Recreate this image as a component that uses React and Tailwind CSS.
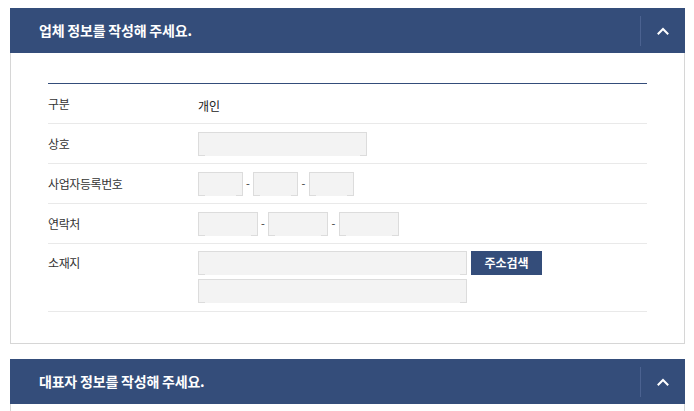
import React from 'react'

const FONT = { fontFamily: '"Noto Sans CJK KR", "Noto Sans", sans-serif' }

const Chevron = () => (
       <svg width="12" height="8" viewBox="0 0 12 8" fill="none">
              <polyline points="1.5,6.5 6,2 10.5,6.5" stroke="#ffffff" strokeWidth="2" strokeLinecap="square" />
       </svg>
)

const PanelHeader = ({ title }) => (
       <div className="h-[45px] bg-[#344d7a] flex items-center">
              <div className="flex-1 pl-[29px] text-white text-[14px] font-bold tracking-[-0.2px]">{title}</div>
              <div className="w-px h-[30px] bg-[#4b6290]"></div>
              <div className="w-[44px] flex items-center justify-center">
                     <Chevron />
              </div>
       </div>
)

// gray input box, bottom border only shows at the corners like the original
const Box = ({ w }) => (
       <div className={`relative h-[24px] bg-[#f3f3f3] border border-[#dcdcdc] ${w}`}>
              <span className="absolute left-[6px] right-[6px] bottom-[-1px] h-px bg-[#f3f3f3]"></span>
       </div>
)

const Dash = ({ w = 'w-[10px]' }) => <span className={`${w} text-center text-[11px] text-[#333]`}>-</span>

const Row = ({ label, children, top }) => (
       <div className={`flex border-b border-[#e9e9e9] ${top ? 'items-start pt-[7px] pb-[8px]' : 'items-center h-[40px]'}`}>
              <div className={`w-[150px] text-[12px] text-[#333] tracking-[-0.4px] ${top ? 'leading-[24px]' : ''}`}>{label}</div>
              <div className="flex-1">{children}</div>
       </div>
)

const App = () => {
       return (
              <div className="min-h-[411px] bg-white pt-[8px] pl-[10px] pr-[9px]" style={FONT}>
                     <section>
                            <PanelHeader title="업체 정보를 작성해 주세요." />
                            <div className="border-x border-b border-[#d6d6d6] px-[37px] pt-[30px] pb-[31px]">
                                   <div className="h-px bg-[#344d7a]"></div>
                                   <Row label="구분">
                                          <span className="text-[12px] text-[#222]">개인</span>
                                   </Row>
                                   <Row label="상호">
                                          <Box w="w-[169px]" />
                                   </Row>
                                   <Row label="사업자등록번호">
                                          <div className="flex items-center">
                                                 <Box w="w-[45px]" />
                                                 <Dash />
                                                 <Box w="w-[45px]" />
                                                 <Dash w="w-[11px]" />
                                                 <Box w="w-[45px]" />
                                          </div>
                                   </Row>
                                   <Row label="연락처">
                                          <div className="flex items-center">
                                                 <Box w="w-[60px]" />
                                                 <Dash />
                                                 <Box w="w-[60px]" />
                                                 <Dash w="w-[11px]" />
                                                 <Box w="w-[60px]" />
                                          </div>
                                   </Row>
                                   <Row label="소재지" top>
                                          <div className="flex flex-col gap-[4px]">
                                                 <div className="flex items-center gap-[4px]">
                                                        <Box w="w-[269px]" />
                                                        <button className="h-[24px] w-[71px] bg-[#344d7a] text-white text-[12px] font-bold">주소검색</button>
                                                 </div>
                                                 <Box w="w-[269px]" />
                                          </div>
                                   </Row>
                            </div>
                     </section>

                     <section className="mt-[15px]">
                            <PanelHeader title="대표자 정보를 작성해 주세요." />
                            <div className="border-x border-[#d6d6d6] h-[20px]"></div>
                     </section>
              </div>
       )
}

export default App
